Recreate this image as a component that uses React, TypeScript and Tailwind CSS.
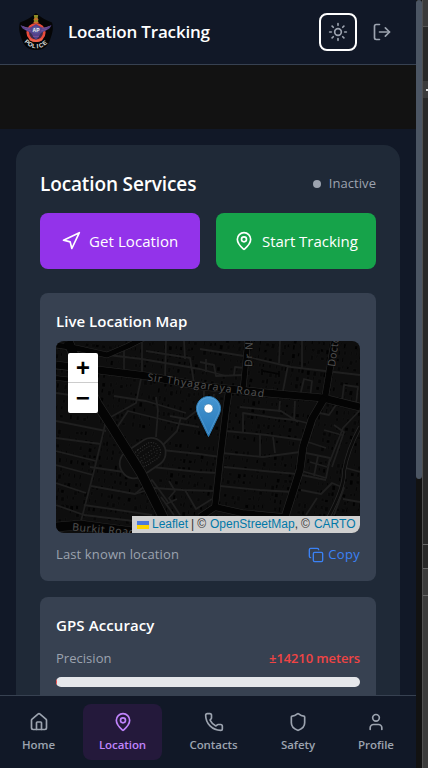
import React from "react";
import { Sun, LogOut, Navigation, MapPin, Copy, House, Phone, Shield, User } from "lucide-react";

function Badge() {
  const letters: [string, number, number, number][] = [
    ["P", 9.2, 29.8, 42],
    ["O", 12.2, 32.4, 28],
    ["L", 15.8, 34, 10],
    ["I", 19.4, 34.2, -4],
    ["C", 23, 33.3, -20],
    ["E", 26.8, 31, -36],
  ];
  return (
    <svg width="36" height="40" viewBox="0 0 36 40" className="block shrink-0">
      <path d="M18 1 C22 5 27 8 34 10.500 C36 17 34 22 32 28 C29 36 24 38 18 38 C12 38 7 36 4 28 C2 22 0 17 2 10.500 C9 8 14 5 18 1Z" fill="#050506" />
      <circle cx="18" cy="20.500" r="8.300" fill="#3a2c4c" stroke="#e84b3b" strokeWidth="2.600" />
      <path d="M11 26 Q18 30 25 26 L24 28.500 Q18 31.500 12 28.500Z" fill="#f06149" />
      <path d="M15.800 3h4.400l-.7 4h1l-.7 3h-3.600l-.7-3h1z" fill="#8e8b25" />
      <path d="M16 7h4M15.500 10.500h5" stroke="#d06b2c" strokeWidth="1.500" />
      <path d="M2.500 13 Q8 16 12 15.500 L15 14 L18 12 L21 14 L24 15.500 Q28 16 33.500 13 Q32 17 28 18.500 L23 21 L20.500 25 L18 28 L15.500 25 L13 21 L8 18.500 Q4 17 2.500 13Z" fill="#55438b" />
      <path d="M5 14.500l7 2.500M31 14.500l-7 2.500M7 17l6 2M29 17l-6 2M15 24.500h6" stroke="#8b559c" strokeWidth=".6" />
      <circle cx="18" cy="18" r="3.600" fill="#5a5b9e" />
      <text x="18" y="19.800" textAnchor="middle" fontSize="5" fontWeight="700" fill="#eee" fontFamily="Liberation Sans, sans-serif">AP</text>
      {letters.map(([c, x, y, r]) => (
        <text key={c} x={x} y={y + 2} transform={`rotate(${r} ${x} ${y})`} textAnchor="middle" fontSize="6" fontWeight="700" fill="#e4e4e4" fontFamily="Liberation Sans, sans-serif">{c}</text>
      ))}
    </svg>
  );
}

const minorRoads = [
  "M0 52 L35 57 M0 80 L50 90 M0 97 L45 103 M0 110 L40 120 M0 124 L37 134 M0 142 L30 152 M0 164 L28 174 L110 184",
  "M50 80 L38 130 L25 180 M58 55 L90 60 L130 72 M53 77 L80 62 L86 33 M56 94 L72 70 L120 82 L143 86",
  "M86 0 L86 33 M52 14 L86 18 L144 28 L170 35 M68 6 L68 33 M90 10 L134 17 L138 42 M110 0 L109 37 M128 0 L129 18",
  "M144 8 L188 15 L235 26 L304 34 M224 0 L223 22 M246 0 L246 27 M232 24 L227 50 M192 47 L227 51 M244 55 L248 38 L256 40 L254 57",
  "M144 21 L158 24 L160 35 L188 34 M178 34 L179 26 L188 27 M150 31 L150 18 M286 60 L288 44 L302 46 L300 63",
  "M102 69 L100 96 M125 76 L121 90 L106 105 M100 56 L102 70 M143 68 L130 78 L114 75",
  "M106 109 L143 113 L164 116 M96 126 L143 131 L162 132 M34 126 L68 131 M35 145 L79 153 L98 147 L127 149 L160 150",
  "M28 164 L96 174 M79 153 L96 139 L112 161 M113 140 L119 150 L113 157 L124 174 M129 149 L140 168 L156 158",
  "M170 90 L211 94 L246 99 L270 107 M166 112 L207 116 L244 111 M168 126 L208 130 L241 133 L270 139",
  "M164 145 L204 149 L236 151 M204 94 L204 116 M217 96 L219 112 M187 91 L187 72 L220 77 L239 79 L259 84",
  "M184 66 L225 70 L242 81 M224 60 L223 71 M239 60 L238 79 M259 71 L273 74 L282 61 M278 84 L288 91 L276 126 M268 89 L286 94",
  "M250 112 L274 117 L270 137 L246 130 M262 115 L258 135 M254 121 L271 126 M245 149 L265 153 L276 142 L288 147 L278 174",
  "M304 69 L287 87 L272 125 M261 157 L250 174 M287 158 L304 161 M290 127 L304 131",
  "M105 156 L118 174 M110 163 L121 158 M158 53 L155 78 M148 50 L147 79",
];

const majorRoads = [
  { d: "M0 24 L42 29 L91 35 L144 45 L211 52 L267 57 L304 66", w: 7 },
  { d: "M0 4 L20 7 L51 14 L72 5 L90 -4", w: 5 },
  { d: "M0 37 L18 39 L42 42", w: 4 },
  { d: "M12 0 L28 38 L42 64 L55 84 L85 132 L118 198", w: 9 },
  { d: "M192 -3 L187 49", w: 5 },
  { d: "M279 -3 L269 57", w: 6 },
  { d: "M173 49 L170 69 L164 119 L159 166", w: 6 },
  { d: "M144 176 L159 166 L186 172 L227 176", w: 6 },
  { d: "M269 56 L256 78 L247 106 L244 129 L229 176", w: 7 },
  { d: "M0 186 L24 184 L84 192", w: 9 },
];

const buildings: { x: number; y: number; w: number; h: number; s: number }[] = [];
for (let row = 0; row < 30; row++) {
  for (let col = 0; col < 58; col++) {
    const n = (row * 73 + col * 37 + row * col * 11) % 101;
    if (n % 5 !== 0) {
      buildings.push({ x: col * 5.6 + (n % 3), y: row * 7.4 + (n % 4) * 0.7, w: 1.5 + (n % 4) * 0.65, h: 2.5 + (n % 5) * 0.6, s: n % 3 });
    }
  }
}

function StreetMap() {
  return (
    <svg viewBox="0 0 304 192" width="304" height="192" className="block">
      <rect width="304" height="192" fill="#0e0e0e" />
      <g transform="rotate(7 152 96)">
        {buildings.map((b, i) => (
          <rect key={i} x={b.x - 10} y={b.y - 14} width={b.w} height={b.h} fill={b.s === 0 ? "#020202" : b.s === 1 ? "#060606" : "#080808"} stroke="#171717" strokeWidth=".4" />
        ))}
      </g>
      <g fill="none" stroke="#1f1f1f" strokeWidth="1.800" strokeLinejoin="round">
        {minorRoads.map((d) => <path key={d} d={d} />)}
      </g>
      <g transform="rotate(-34 86 117)">
        <rect x="62" y="103" width="49" height="29" rx="14" fill="#0d0d0d" stroke="#222" strokeWidth="1.800" />
        <rect x="79" y="108" width="27" height="18" rx="8" fill="none" stroke="#363636" strokeDasharray="1 1.500" />
        <rect x="82" y="111" width="21" height="12" rx="6" fill="none" stroke="#303030" strokeDasharray="1 1.500" />
        <path d="M82 116h21M84 119h18" stroke="#303030" strokeDasharray="1 2" />
      </g>
      <path d="M304 86 Q292 108 288 130 Q289 145 272 177" fill="none" stroke="#292929" strokeWidth="4" />
      <path d="M304 86 Q292 108 288 130 Q289 145 272 177" fill="none" stroke="#0b0b0b" strokeWidth="2.500" />
      <path d="M206 28v6M207 30l16 3M223 30v6" fill="none" stroke="#030303" strokeWidth="1.500" />
      <g fill="none" strokeLinejoin="round">
        {majorRoads.map((r) => <path key={r.d} d={r.d} stroke="#272727" strokeWidth={r.w + 1.2} />)}
        {majorRoads.map((r) => <path key={r.d} d={r.d} stroke="#040404" strokeWidth={r.w} />)}
      </g>
      <g fill="#515151" stroke="#090909" strokeWidth="1.200" paintOrder="stroke" fontFamily="Open Sans, Noto Sans, sans-serif" fontSize="10.500" fontWeight="500">
        <path id="thyagaraya" d="M91 39.500 Q137 46.500 220 58" fill="none" stroke="none" />
        <text textLength="118"><textPath href="#thyagaraya">Sir Thyagaraya Road</textPath></text>
        <text transform="translate(196 26) rotate(-88)" textLength="25">Dr N</text>
        <text transform="translate(279 26) rotate(-82)" textLength="30">Docto</text>
        <text transform="translate(16 189.500) rotate(5)" textLength="63">Burkit Road</text>
      </g>
    </svg>
  );
}

function Marker() {
  return (
    <svg width="25" height="41" viewBox="0 0 25 41" className="absolute left-[140px] top-[55px]">
      <defs>
        <linearGradient id="pin" x1="0" y1="0" x2="0" y2="1">
          <stop stopColor="#4596d2" /><stop offset="1" stopColor="#2878b8" />
        </linearGradient>
      </defs>
      <path d="M12.500 .5C5.900 .5 .5 5.900 .5 12.400C.5 15.800 2 19 3.600 22L12.500 40.500L21.400 22C23 19 24.500 15.800 24.500 12.400C24.500 5.900 19.100 .5 12.500 .5Z" fill="url(#pin)" stroke="#2e7cb4" />
      <path d="M12.500 1.600C6.500 1.600 1.600 6.500 1.600 12.400C1.600 15.500 3 18.500 4.600 21.600L12.500 38L20.400 21.600C22 18.500 23.400 15.500 23.400 12.400C23.400 6.500 18.500 1.600 12.500 1.600Z" fill="none" stroke="#75b4e4" strokeOpacity=".4" />
      <circle cx="12.500" cy="12.500" r="4.500" fill="#fff" stroke="#2e6c97" strokeOpacity=".5" />
    </svg>
  );
}

const navItems = [
  { label: "Home", icon: House, box: "w-[65px] text-[#9ca3af]" },
  { label: "Location", icon: MapPin, box: "w-[79px] bg-[#24193b] text-[#c084fc]" },
  { label: "Contacts", icon: Phone, box: "w-[79px] text-[#9ca3af]" },
  { label: "Safety", icon: Shield, box: "w-[66px] text-[#9ca3af]" },
  { label: "Profile", icon: User, box: "w-[66px] text-[#9ca3af]" },
];

export default function App() {
  return (
    <div className="flex h-[768px] w-[428px] overflow-hidden bg-[#121212] font-['Open_Sans','Noto_Sans',sans-serif] text-white">
      <div className="flex h-full w-[416px] shrink-0 flex-col bg-[#111827]">
        <header className="flex h-[65px] shrink-0 items-center border-b border-[#374151] pl-[18px] pr-[24px]">
          <Badge />
          <h1 className="ml-[14px] whitespace-nowrap text-[17px] font-semibold leading-7 tracking-[-0.18px]">Location Tracking</h1>
          <button className="ml-auto flex size-[38px] items-center justify-center rounded-lg border-2 border-white bg-[#111827] text-[#9ca3af]"><Sun size={20} /></button>
          <button className="ml-[15px] text-[#9ca3af]"><LogOut size={20} /></button>
        </header>
        <div className="h-16 shrink-0 bg-[#121212]" />
        <main className="min-h-0 flex-1 overflow-hidden px-4 pt-4">
          <section className="h-[650px] rounded-2xl bg-[#1f2937] px-6 pt-6">
            <div className="flex h-[30px] items-center justify-between">
              <h2 className="whitespace-nowrap text-[19px] font-semibold tracking-[-0.13px]">Location Services</h2>
              <div className="flex h-7 items-center gap-2 whitespace-nowrap text-[13px] tracking-[0.05px] text-[#9ca3af]"><span className="size-2 rounded-full bg-[#9ca3af]" />Inactive</div>
            </div>
            <div className="mt-[14px] grid grid-cols-2 gap-4">
              <button className="flex h-14 items-center whitespace-nowrap rounded-lg bg-[#9333ea] pl-[21px] text-[15px] tracking-[0.08px]"><Navigation size={20} /><span className="ml-2">Get Location</span></button>
              <button className="flex h-14 items-center whitespace-nowrap rounded-lg bg-[#16a34a] pl-[18px] text-[15px] tracking-[-0.03px]"><MapPin size={20} /><span className="ml-2">Start Tracking</span></button>
            </div>
            <section className="mt-6 h-[288px] rounded-lg bg-[#374151] px-4 pt-4">
              <h3 className="h-8 whitespace-nowrap text-[15px] font-semibold leading-[25px] tracking-[0.03px]">Live Location Map</h3>
              <div className="relative h-48 overflow-hidden rounded-lg">
                <StreetMap />
                <div className="absolute left-3 top-3 flex h-[60px] w-[30px] flex-col overflow-hidden rounded-[2px] bg-white text-black">
                  <button className="flex h-[30px] items-center justify-center border-b border-[#ccc] pt-1 font-['Liberation_Mono',monospace] text-[24px] font-bold leading-none">+</button>
                  <button className="flex h-[30px] items-center justify-center pt-1 font-['Liberation_Mono',monospace] text-[24px] font-bold leading-none">−</button>
                </div>
                <Marker />
                <div className="absolute bottom-0 right-0 flex h-[17px] w-[228px] items-center whitespace-nowrap bg-[#d0d0d0] pl-[5px] font-['Liberation_Sans',Arial,sans-serif] text-[12px] leading-[17px] text-[#333]">
                  <svg width="12" height="8" viewBox="0 0 12 8" className="mr-[3px] shrink-0"><path fill="#4b79dd" d="M0 0h12v4H0z" /><path fill="#fdd500" d="M0 4h12v4H0z" /></svg>
                  <span className="text-[#0078a8]">Leaflet</span><span className="ml-[3px]">|</span><span className="ml-[3px]">©</span><span className="ml-1 text-[#0078a8]">OpenStreetMap</span><span>,</span><span className="ml-[3px]">©</span><span className="ml-1 text-[#0078a8]">CARTO</span>
                </div>
              </div>
              <div className="mt-[11px] flex h-[22px] items-center justify-between whitespace-nowrap text-[13px]">
                <span className="tracking-[0.13px] text-[#9ca3af]">Last known location</span>
                <button className="flex items-center gap-1 tracking-[0.3px] text-[#3b82f6]"><Copy size={16} />Copy</button>
              </div>
            </section>
            <section className="mt-4 h-[150px] rounded-lg bg-[#374151] px-4 pt-4">
              <h3 className="whitespace-nowrap text-[15px] font-semibold leading-[25px] tracking-[0.1px]">GPS Accuracy</h3>
              <div className="mt-[11px] flex h-5 items-center justify-between whitespace-nowrap text-[13px]">
                <span className="tracking-[0.03px] text-[#9ca3af]">Precision</span>
                <span className="font-semibold tracking-[-0.12px] text-[#ef4444]">±14210 meters</span>
              </div>
              <div className="mt-2 h-[10px] overflow-hidden rounded-full bg-[#e5e7eb]"><div className="h-full w-px bg-[#ef4444]" /></div>
            </section>
          </section>
        </main>
        <nav className="flex h-[73px] shrink-0 gap-3 border-t border-[#374151] bg-[#111827] pl-[6px] pt-2">
          {navItems.map(({ label, icon: Icon, box }) => (
            <button key={label} className={`flex h-14 shrink-0 flex-col items-center rounded-lg pt-2 ${box}`}>
              <Icon size={20} />
              <span className="mt-1 whitespace-nowrap text-[11.5px] font-semibold leading-[18px] tracking-[-0.07px]">{label}</span>
            </button>
          ))}
        </nav>
      </div>
      <div className="h-full w-[6px] shrink-0 bg-[#121212]"><div className="h-[479px] rounded-full bg-[#4b5563]" /></div>
      <div className="flex h-full w-[6px] shrink-0 flex-col border-l border-[#505050] bg-[#282828]">
        <div className="h-[27px] border-b border-[#555] bg-[#3a3a3a]" />
        <div className="h-[54px]" />
        <div className="flex h-[17px] items-center bg-[#3b3b3b] pl-[3px]"><div className="h-[2px] w-[2px] bg-[#ddd]" /></div>
        <div className="h-[447px] border-b border-[#666]" />
        <div className="h-6 border-b border-[#666]" />
        <div className="h-[27px] border-b border-[#666] bg-[#3b3b3b]" />
        <div className="flex-1 bg-[#3b3b3b]" />
      </div>
    </div>
  );
}
